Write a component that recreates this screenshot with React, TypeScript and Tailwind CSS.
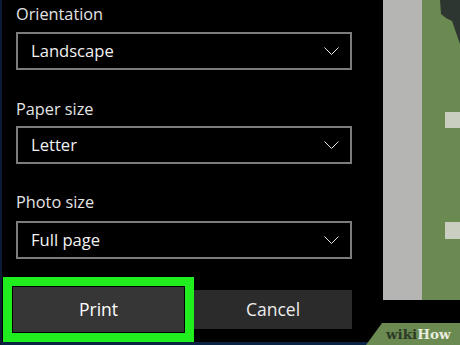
import React from "react";

const font = { fontFamily: '"Open Sans", "Noto Sans", sans-serif' };

function Chevron() {
  return (
    <svg width="15" height="8" viewBox="0 0 15 8" className="shrink-0">
      <polyline points="0.5,0.5 7.5,7.5 14.5,0.5" fill="none" stroke="#e6e6e6" strokeWidth="1" />
    </svg>
  );
}

function Select({ value }: { value: string }) {
  return (
    <div className="h-[38px] w-[336px] border-2 border-[#7c7c7c] flex items-center justify-between pl-[13px] pr-[11px]">
      <span className="text-[16.6px] text-[#f2f2f2]">{value}</span>
      <Chevron />
    </div>
  );
}

function Label({ text }: { text: string }) {
  return <div className="h-[24px] leading-[24px] text-[16.3px] text-[#e4e4e4]">{text}</div>;
}

export default function App() {
  return (
    <div className="relative w-[460px] h-[345px] bg-black overflow-hidden flex" style={font}>
      <div className="w-[2px] h-full bg-[#0b1d36] shrink-0" />
      <div className="flex flex-col w-[381px] shrink-0 h-full">
        <div className="flex flex-col pl-[14px] pt-[2px]">
          <Label text="Orientation" />
          <div className="mt-[6px]">
            <Select value="Landscape" />
          </div>
          <div className="mt-[27px]">
            <Label text="Paper size" />
          </div>
          <div className="mt-[5px]">
            <Select value="Letter" />
          </div>
          <div className="mt-[26px]">
            <Label text="Photo size" />
          </div>
          <div className="mt-[7px]">
            <Select value="Full page" />
          </div>
        </div>
        <div className="flex items-center mt-[18px] pl-[1px]">
          <div className="border-[9px] border-[#20ee1f] bg-black p-[1px] h-[65px] w-[191px] shrink-0">
            <div className="h-full w-full bg-[#363636] flex items-center justify-center text-[17.5px] text-white font-medium">
              Print
            </div>
          </div>
          <div className="h-[39px] w-[158px] bg-[#2b2b2b] flex items-center justify-center text-[17.5px] text-[#ececec]">
            Cancel
          </div>
        </div>
        <div className="mt-auto h-[3px] bg-[#0c2443]" />
      </div>
      <div className="flex flex-col w-[77px] shrink-0">
        <div className="h-[300px] flex">
          <div className="w-[39px] bg-[#b5b6b4]" />
          <div className="flex-1 bg-[#6b8a52] relative">
            <svg width="38" height="300" viewBox="0 0 38 300" className="block">
              <polygon points="18,0 19,14 24,18 30,21 38,44 38,0" fill="#2e3631" />
              <rect x="23" y="112" width="15" height="16" fill="#c9cec0" />
              <rect x="23" y="222" width="15" height="17" fill="#c9cec0" />
            </svg>
          </div>
        </div>
      </div>
      <div className="absolute left-[366px] top-[323px] w-[94px] h-[22px]">
        <svg width="94" height="22" viewBox="0 0 94 22" className="absolute inset-0">
          <polygon points="16,0 94,0 94,22 0,22" fill="#6b8a52" />
        </svg>
        <div
          className="absolute left-[20px] top-[1px] text-[13.5px] font-bold leading-[20px]"
          style={{ fontFamily: '"DejaVu Serif", serif' }}
        >
          <span className="text-[#2c3a26]">wiki</span>
          <span className="text-[#e9ecdf]">How</span>
        </div>
      </div>
    </div>
  );
}
